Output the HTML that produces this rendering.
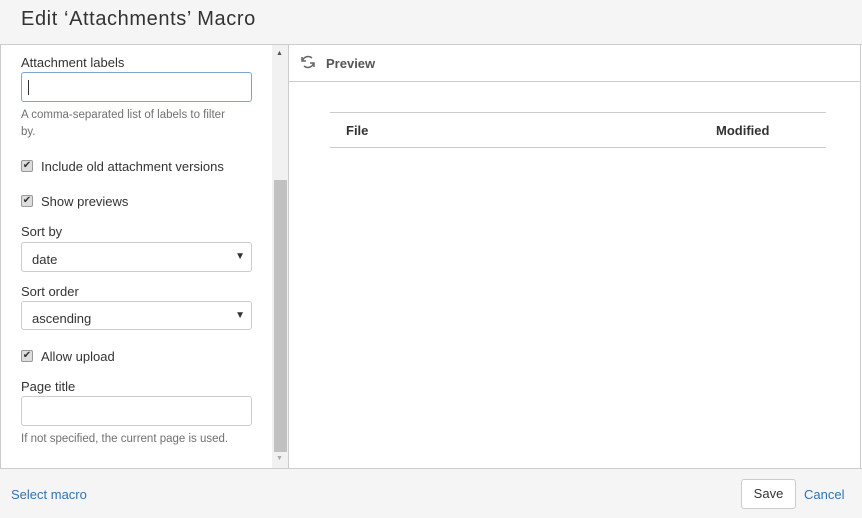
<!DOCTYPE html>
<html><head><meta charset="utf-8"><style>
*{box-sizing:border-box;margin:0;padding:0}
body{width:862px;height:518px;position:relative;overflow:hidden;background:#fff;font-family:"Liberation Sans",sans-serif;color:#333;font-size:13px}
.a{position:absolute}
.hdr{left:0;top:0;width:862px;height:45px;background:#f5f5f5;border-bottom:1px solid #ccc}
.hdr span{position:absolute;left:21px;top:8px;font-size:20px;color:#333;letter-spacing:0.6px}
.lbl{font-size:13px;color:#333}
.inp{width:231px;height:30px;border:1px solid #ccc;border-radius:3px;background:#fff}
.help{font-size:11.5px;color:#707070;line-height:17px}
.cb{width:12px;height:12px;border:1px solid #999;border-radius:2px;background:#ddd;font-size:10px;line-height:10px;text-align:center;color:#333}
.sel{width:231px;height:30px;border:1px solid #ccc;border-radius:3px;background:#fff;padding:9px 10px;font-size:13px}
.sel:after{content:"▼";position:absolute;right:6px;top:8px;font-size:10px}
.foot{left:0;top:468px;width:862px;height:50px;background:#f5f5f5;border-top:1px solid #ccc}
</style></head><body>
<div class="a hdr"><span>Edit ‘Attachments’ Macro</span></div>
<div class="a" style="left:0;top:45px;width:1px;height:423px;background:#ccc"></div>
<div class="a" style="left:860px;top:45px;width:1px;height:423px;background:#ccc"></div>
<div class="a lbl" style="left:21px;top:55px">Attachment labels</div>
<div class="a inp" style="left:21px;top:72px;border-color:#7fa3d1"><div class="a" style="left:6px;top:7px;width:1px;height:15px;background:#333"></div></div>
<div class="a help" style="left:21px;top:107px;width:240px">A comma-separated list of labels to filter<br>by.</div>
<div class="a cb" style="left:21px;top:160px">✔</div>
<div class="a lbl" style="left:41px;top:159px">Include old attachment versions</div>
<div class="a cb" style="left:21px;top:195px">✔</div>
<div class="a lbl" style="left:41px;top:194px">Show previews</div>
<div class="a lbl" style="left:21px;top:224px">Sort by</div>
<div class="a sel" style="left:21px;top:242px">date</div>
<div class="a lbl" style="left:21px;top:284px">Sort order</div>
<div class="a sel" style="left:21px;top:301px;height:29px">ascending</div>
<div class="a cb" style="left:21px;top:350px">✔</div>
<div class="a lbl" style="left:41px;top:349px">Allow upload</div>
<div class="a lbl" style="left:21px;top:379px">Page title</div>
<div class="a inp" style="left:21px;top:396px"></div>
<div class="a help" style="left:21px;top:431px">If not specified, the current page is used.</div>
<div class="a" style="left:272px;top:45px;width:16px;height:423px;background:#f1f1f1"></div>
<div class="a" style="left:276px;top:50px;font-size:7px;color:#555">▲</div>
<div class="a" style="left:276px;top:455px;font-size:7px;color:#aaa">▼</div>
<div class="a" style="left:274px;top:180px;width:13px;height:272px;background:#c1c1c1"></div>
<div class="a" style="left:288px;top:45px;width:1px;height:423px;background:#ccc"></div>
<div class="a" style="left:289px;top:81px;width:571px;height:1px;background:#ccc"></div>
<svg class="a" style="left:300px;top:54px" width="16" height="16" viewBox="0 0 16 16"><path d="M12 4A6 6 0 0 0 2.5 6.5M2 3v4h4" fill="none" stroke="#666" stroke-width="1.5"/><path d="M4 12a6 6 0 0 0 9.5-2.5M14 13V9h-4" fill="none" stroke="#666" stroke-width="1.5"/></svg>
<div class="a" style="left:326px;top:56px;font-weight:bold;color:#555">Preview</div>
<div class="a" style="left:330px;top:112px;width:496px;height:1px;background:#ccc"></div>
<div class="a" style="left:330px;top:147px;width:496px;height:1px;background:#ccc"></div>
<div class="a" style="left:346px;top:123px;font-weight:bold">File</div>
<div class="a" style="left:716px;top:123px;font-weight:bold">Modified</div>
<div class="a foot"></div>
<div class="a" style="left:11px;top:487px;color:#3572b0">Select macro</div>
<div class="a" style="left:741px;top:479px;width:55px;height:30px;border:1px solid #ccc;border-radius:3px;background:#fff;text-align:center;line-height:28px;font-size:13px">Save</div>
<div class="a" style="left:804px;top:487px;color:#3572b0">Cancel</div>
</body></html>
